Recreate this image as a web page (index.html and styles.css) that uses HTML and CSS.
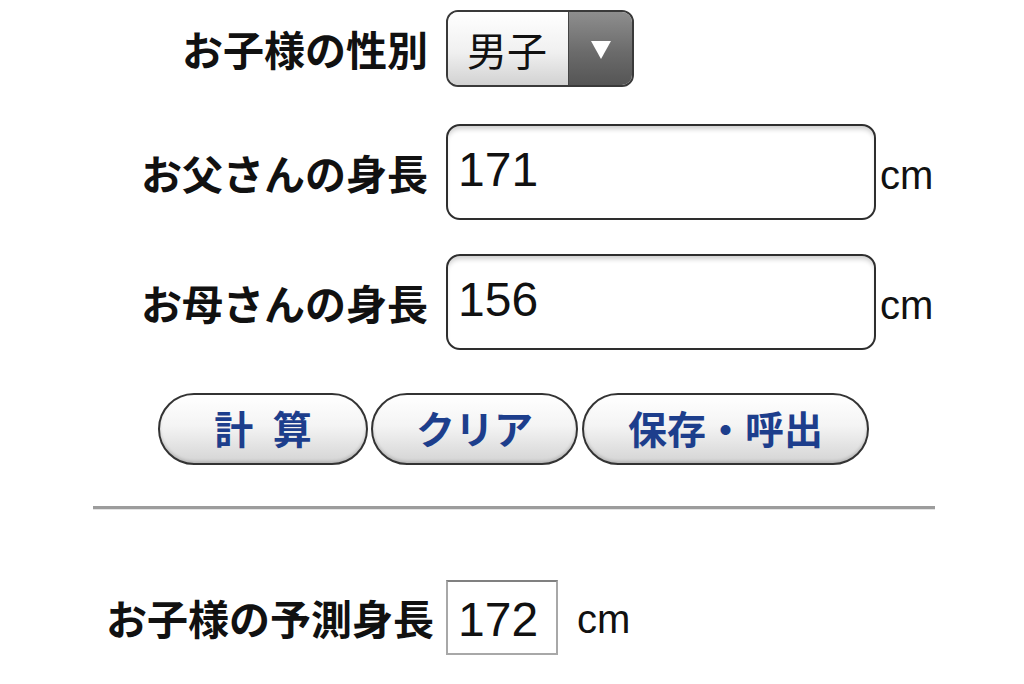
FILE: index.html
```html
<!DOCTYPE html>
<html lang="ja">
<head>
    <meta charset="UTF-8">
    <meta name="viewport" content="width=device-width, initial-scale=1.0">
    <title>子供の身長予測</title>
    <link rel="stylesheet" href="styles.css">
</head>
<body>
    <div class="container">
        <div class="row row-sex">
            <label class="label">お子様の性別</label>
            <div class="select">
                <span class="select-value">男子</span>
                <span class="select-arrow"></span>
            </div>
        </div>
        <div class="row row-father">
            <label class="label" for="father">お父さんの身長</label>
            <input type="text" id="father" class="height-input" value="171">
            <span class="unit">cm</span>
        </div>
        <div class="row row-mother">
            <label class="label" for="mother">お母さんの身長</label>
            <input type="text" id="mother" class="height-input" value="156">
            <span class="unit">cm</span>
        </div>
        <div class="button-container">
            <button class="btn btn-calc">計&ensp;算</button>
            <button class="btn btn-clear">クリア</button>
            <button class="btn btn-save">保存・呼出</button>
        </div>
        <hr class="divider">
        <div class="row row-result">
            <span class="label label-result">お子様の予測身長</span>
            <span class="result-box">172</span>
            <span class="unit unit-result">cm</span>
        </div>
    </div>
</body>
</html>
```

FILE: styles.css
```css
body {
    margin: 0;
    padding: 0;
    background: #fff;
    color: #111;
    font-family: "Noto Sans CJK JP", "Liberation Sans", sans-serif;
}
.container {
    width: 1024px;
    padding-top: 10px;
}
.row {
    display: flex;
    align-items: center;
}
.label {
    width: 428px;
    margin-right: 18px;
    text-align: right;
    font-size: 41px;
    font-weight: bold;
    line-height: 1;
}
.row-father {
    margin-top: 37px;
}
.row-mother {
    margin-top: 34px;
}
.select {
    display: flex;
    width: 188px;
    height: 77px;
    box-sizing: border-box;
    border: 2px solid #3a3a3a;
    border-radius: 12px;
    overflow: hidden;
}
.select-value {
    flex: 1;
    display: flex;
    align-items: center;
    padding-left: 19px;
    font-size: 40px;
    font-weight: normal;
    background: linear-gradient(#ffffff, #f0f0f0 55%, #d2d2d2);
    border-right: 1px solid #444;
}
.select-arrow {
    width: 63px;
    display: flex;
    align-items: center;
    justify-content: center;
    background: linear-gradient(#8e8e8e, #6b6b6b 55%, #555);
}
.select-arrow::after {
    content: "";
    border-left: 10px solid transparent;
    border-right: 10px solid transparent;
    border-top: 18px solid #fff;
    margin-top: 2px;
}
.height-input {
    width: 430px;
    height: 96px;
    box-sizing: border-box;
    margin: 0;
    padding: 0 10px 6px;
    border: 2px solid #2e2e2e;
    border-radius: 14px;
    box-shadow: inset 0 5px 5px -2px rgba(0,0,0,0.2);
    font-family: "Liberation Sans", Arial, sans-serif;
    font-size: 48px;
    color: #111;
    background: #fff;
    outline: none;
}
.unit {
    margin-left: 4px;
    font-family: "Liberation Sans", Arial, sans-serif;
    font-size: 40px;
    padding-top: 6px;
}
.button-container {
    display: flex;
    gap: 3px;
    margin-top: 43px;
    margin-left: 158px;
}
.btn {
    height: 72px;
    box-sizing: border-box;
    border: 2px solid #333;
    border-radius: 36px;
    background: linear-gradient(#ffffff, #f4f4f4 45%, #d4d4d4);
    box-shadow: inset 0 -2px 3px rgba(0,0,0,0.15);
    color: #1d3e8c;
    font-family: "Noto Sans CJK JP", sans-serif;
    font-size: 39px;
    font-weight: bold;
    padding: 0 0 4px;
    cursor: pointer;
}
.btn-calc {
    width: 210px;
}
.btn-clear {
    width: 207px;
}
.btn-save {
    width: 287px;
    margin-left: 1px;
}
.divider {
    width: 842px;
    margin: 41px 0 0 93px;
    height: 0;
    border: none;
    border-top: 3px solid #9c9c9c;
    border-bottom: 1px solid #e4e4e4;
}
.row-result {
    margin-top: 70px;
}
.label-result {
    width: 434px;
    margin-right: 12px;
}
.result-box {
    width: 112px;
    height: 75px;
    box-sizing: border-box;
    border: 2px solid #a8a8a8;
    border-top-color: #808080;
    display: flex;
    align-items: center;
    padding: 4px 0 0 10px;
    font-family: "Liberation Sans", Arial, sans-serif;
    font-size: 48px;
}
.unit-result {
    margin-left: 19px;
    padding-top: 4px;
}
```
